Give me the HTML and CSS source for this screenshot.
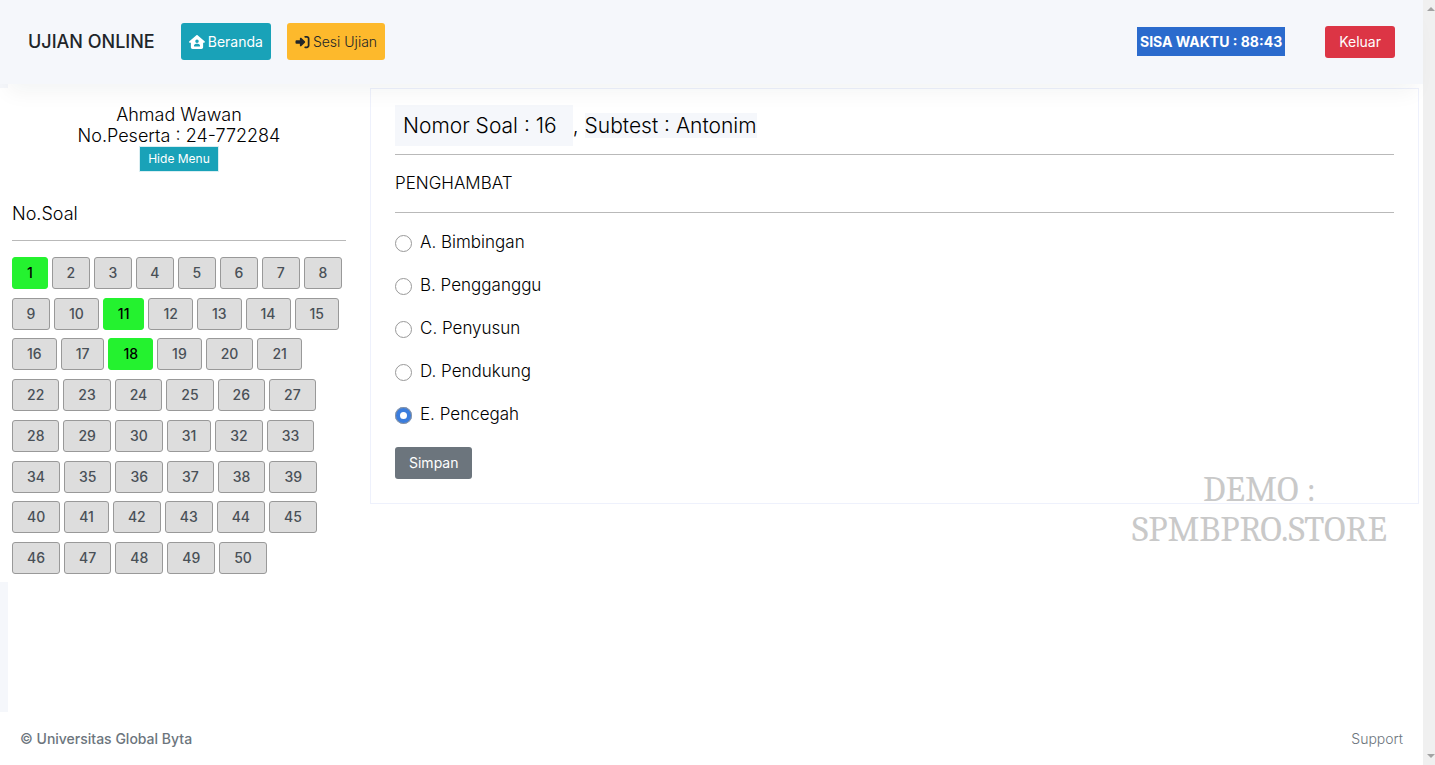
FILE: index.html
```html
<!DOCTYPE html>
<html lang="id">
<head>
<meta charset="utf-8">
<meta name="viewport" content="width=device-width, initial-scale=1">
<title>Ujian Online</title>
<link rel="stylesheet" href="styles.css">
</head>
<body>
<div class="page">
  <header class="topbar">
    <h1 class="brand">UJIAN ONLINE</h1>
    <nav class="nav">
      <a class="btn btn-info" href="#">
        <svg class="icon-home" viewBox="0 0 576 512" aria-hidden="true"><path fill="currentColor" fill-rule="evenodd" d="M575.8 255.500c0 18-15 32.100-32 32.100h-32V448c0 35-29 64-64 64H128c-35 0-64-29-64-64V287.600H32c-18 0-32-14-32-32.100 0-9 3-17 10-24L266.400 8c7-7 15-8 22-8s15 2 21 7l255.400 224.500c8 7 12 15 11 24zM352 224a64 64 0 1 0-128 0 64 64 0 1 0 128 0zm-96 96c-44.200 0-80 35.800-80 80 0 8.800 7.200 16 16 16h192c8.800 0 16-7.200 16-16 0-44.200-35.800-80-80-80z"/></svg>
        <span>Beranda</span>
      </a>
      <a class="btn btn-warning" href="#">
        <svg class="icon-login" viewBox="0 0 512 512" aria-hidden="true"><path fill="currentColor" d="M217.900 105.900 340.700 228.700c7.200 7.200 11.300 17.100 11.300 27.300s-4.100 20.100-11.300 27.300L217.900 406.100c-6.400 6.400-15 9.900-24 9.900-18.700 0-33.900-15.200-33.900-33.900V320H32c-17.700 0-32-14.300-32-32v-64c0-17.700 14.300-32 32-32h128v-62.100c0-18.700 15.200-33.900 33.900-33.900 9 0 17.600 3.600 24 9.900zM352 416h64c17.700 0 32-14.300 32-32V128c0-17.700-14.300-32-32-32h-64c-17.700 0-32-14.300-32-32s14.300-32 32-32h64c53 0 96 43 96 96v256c0 53-43 96-96 96h-64c-17.700 0-32-14.300-32-32s14.300-32 32-32z"/></svg>
        <span>Sesi Ujian</span>
      </a>
    </nav>
    <strong class="timer">SISA WAKTU : 88:43</strong>
    <button class="btn btn-danger" type="button">Keluar</button>
  </header>

  <div class="workspace">
    <aside class="sidebar">
      <div class="participant">
        <p>Ahmad Wawan</p>
        <p>No.Peserta : 24-772284</p>
        <button class="btn-toggle" type="button">Hide Menu</button>
      </div>
      <h2 class="side-title">No.Soal</h2>
      <div class="numbers">
        <button class="num done" type="button">1</button>
        <button class="num single" type="button">2</button>
        <button class="num single" type="button">3</button>
        <button class="num single" type="button">4</button>
        <button class="num single" type="button">5</button>
        <button class="num single" type="button">6</button>
        <button class="num single" type="button">7</button>
        <button class="num single" type="button">8</button>
        <button class="num single" type="button">9</button>
        <button class="num" type="button">10</button>
        <button class="num done" type="button">11</button>
        <button class="num" type="button">12</button>
        <button class="num" type="button">13</button>
        <button class="num" type="button">14</button>
        <button class="num" type="button">15</button>
        <button class="num" type="button">16</button>
        <button class="num" type="button">17</button>
        <button class="num done" type="button">18</button>
        <button class="num" type="button">19</button>
        <button class="num" type="button">20</button>
        <button class="num" type="button">21</button>
        <button class="num" type="button">22</button>
        <button class="num" type="button">23</button>
        <button class="num" type="button">24</button>
        <button class="num" type="button">25</button>
        <button class="num" type="button">26</button>
        <button class="num" type="button">27</button>
        <button class="num" type="button">28</button>
        <button class="num" type="button">29</button>
        <button class="num" type="button">30</button>
        <button class="num" type="button">31</button>
        <button class="num" type="button">32</button>
        <button class="num" type="button">33</button>
        <button class="num" type="button">34</button>
        <button class="num" type="button">35</button>
        <button class="num" type="button">36</button>
        <button class="num" type="button">37</button>
        <button class="num" type="button">38</button>
        <button class="num" type="button">39</button>
        <button class="num" type="button">40</button>
        <button class="num" type="button">41</button>
        <button class="num" type="button">42</button>
        <button class="num" type="button">43</button>
        <button class="num" type="button">44</button>
        <button class="num" type="button">45</button>
        <button class="num" type="button">46</button>
        <button class="num" type="button">47</button>
        <button class="num" type="button">48</button>
        <button class="num" type="button">49</button>
        <button class="num" type="button">50</button>
      </div>
    </aside>

    <main class="card">
      <h2 class="question-head"><span class="question-no">Nomor Soal : 16</span><span>,</span><span class="subtest">Subtest : Antonim</span></h2>
      <p class="question">PENGHAMBAT</p>
      <form class="answers">
        <label class="answer"><input type="radio" name="answer" value="A"><span>A. Bimbingan</span></label>
        <label class="answer"><input type="radio" name="answer" value="B"><span>B. Pengganggu</span></label>
        <label class="answer"><input type="radio" name="answer" value="C"><span>C. Penyusun</span></label>
        <label class="answer"><input type="radio" name="answer" value="D"><span>D. Pendukung</span></label>
        <label class="answer"><input type="radio" name="answer" value="E" checked><span>E. Pencegah</span></label>
        <button class="btn btn-secondary" type="button">Simpan</button>
      </form>
    </main>
    <div class="watermark">DEMO :<br>SPMBPRO.STORE</div>
  </div>

  <footer class="footer">
    <span class="copyright">© Universitas Global Byta</span>
    <a class="support" href="#">Support</a>
  </footer>
</div>
<div class="scroll-track" aria-hidden="true">
  <span class="arrow arrow-up"></span>
  <span class="arrow arrow-down"></span>
</div>
</body>
</html>
```
FILE: styles.css
```css
* { box-sizing: border-box; }

body {
  margin: 0;
  min-height: 100vh;
  display: flex;
  overflow-x: hidden;
  background: #fff;
  color: #000;
  font: 300 14px/20px Inter, sans-serif;
}

h1, h2, p { margin: 0; font-weight: inherit; }
a { color: inherit; text-decoration: none; }
button { font: inherit; cursor: pointer; }

.page {
  flex: 1;
  min-width: 0;
  display: flex;
  flex-direction: column;
}

/* top bar */
.topbar {
  position: relative;
  z-index: 1;
  display: flex;
  align-items: center;
  min-height: 84px;
  padding: 0 28px 1px;
  background: #f5f7fb;
  box-shadow: 0 16px 20px -8px rgba(20, 40, 30, 0.05);
}
.brand {
  margin-right: 26px;
  color: #212529;
  font-size: 18px;
  font-weight: 500;
}
.nav { display: flex; gap: 16px; }
.btn {
  display: inline-flex;
  align-items: center;
  gap: 3px;
  border: 0;
  border-radius: 3px;
  padding: 6px 14px;
  font-size: 14px;
  font-weight: 400;
  color: #fff;
}
.nav .btn { height: 37px; padding: 0 8px; }
.btn-info { background: #19a2b8; }
.btn-warning { background: #fdb92c; color: #212529; font-weight: 300; }
.btn-danger { background: #dc3545; }
.btn-secondary { background: #6c757d; }
.icon-home { width: 16px; height: 14px; }
.icon-login { width: 15px; height: 14px; }
.timer {
  margin: 0 40px 0 auto;
  padding: 5px 3px 4px;
  background: #2b6bcd;
  color: #fff;
  font-weight: 700;
}

/* workspace */
.workspace {
  position: relative;
  flex: 1;
  display: flex;
  align-items: flex-start;
  padding: 4px 4px 0 0;
  background: linear-gradient(#f5f7fb, #f5f7fb) 0 0 / 8px 100% no-repeat;
}
.sidebar {
  flex: 0 0 370px;
  padding: 16px 24px 8px 12px;
  background: #fff;
}
.participant {
  display: flex;
  flex-direction: column;
  align-items: center;
  font-size: 18px;
  line-height: 21px;
}
.btn-toggle {
  border: 1px solid #d9eef2;
  padding: 2px 8px;
  background: #19a2b8;
  color: #fff;
  font-size: 12px;
  font-weight: 400;
  line-height: 20px;
}
.side-title {
  margin: 31px 0 16px;
  padding-bottom: 16px;
  border-bottom: 1px solid #b9b9b9;
  font-size: 18px;
  line-height: 21px;
}
.numbers {
  display: flex;
  flex-wrap: wrap;
  align-content: space-between;
  column-gap: 4px;
  min-height: 317px;
}
.num {
  height: 32px;
  padding: 0 14px;
  border: 1px solid #999;
  border-radius: 3px;
  background: #ddd;
  color: #495057;
  font-weight: 500;
}
.num.single { width: 38px; padding: 0; }
.num.done { border-color: #24f22f; background: #24f22f; color: #000; }

/* question card */
.card {
  flex: 1;
  min-width: 0;
  padding: 16px 24px 24px;
  border: 1px solid #eef1fc;
}
.question-head {
  display: flex;
  align-items: center;
  padding-bottom: 8px;
  border-bottom: 1px solid #b9b9b9;
  font-size: 21px;
  line-height: 25px;
}
.question-no { padding: 8px 16px 8px 8px; background: #f5f7fb; }
.subtest { margin-left: 6px; background: #f5f7fb; }
.question {
  padding: 18px 0;
  border-bottom: 1px solid #b9b9b9;
  font-size: 17px;
  line-height: 21px;
}
.answers { display: flex; flex-direction: column; align-items: flex-start; padding-top: 19px; }
.answer {
  display: flex;
  align-items: center;
  gap: 8px;
  margin-bottom: 22px;
  font-size: 17px;
  line-height: 21px;
}
.answer input {
  appearance: none;
  width: 17px;
  height: 17px;
  margin: 1px 0 0;
  border: 1px solid #999;
  border-radius: 50%;
  background: #fff;
}
.answer input:checked { border: 5px solid #3b7ddd; outline: 1px solid #999; outline-offset: -1px; }

.watermark {
  position: absolute;
  right: 36px;
  bottom: 162px;
  color: #c9c9c9;
  font: 400 36px/40px Cambria, Caladea, "Liberation Serif", serif;
  text-align: center;
}

/* footer */
.footer {
  display: flex;
  align-items: center;
  justify-content: space-between;
  min-height: 53px;
  padding: 0 20px;
  background: #fff;
  color: #6c757d;
}
.copyright { font-weight: 500; }

/* scroll gutter */
.scroll-track {
  flex: 0 0 12px;
  display: flex;
  flex-direction: column;
  justify-content: space-between;
  align-items: flex-end;
  padding: 7px 0;
  background: #f0f0f0;
}
.arrow { border: 4px solid transparent; }
.arrow-up { border-top: 0; border-bottom-color: #a3a3a3; }
.arrow-down { border-bottom: 0; border-top-color: #a3a3a3; }
```
